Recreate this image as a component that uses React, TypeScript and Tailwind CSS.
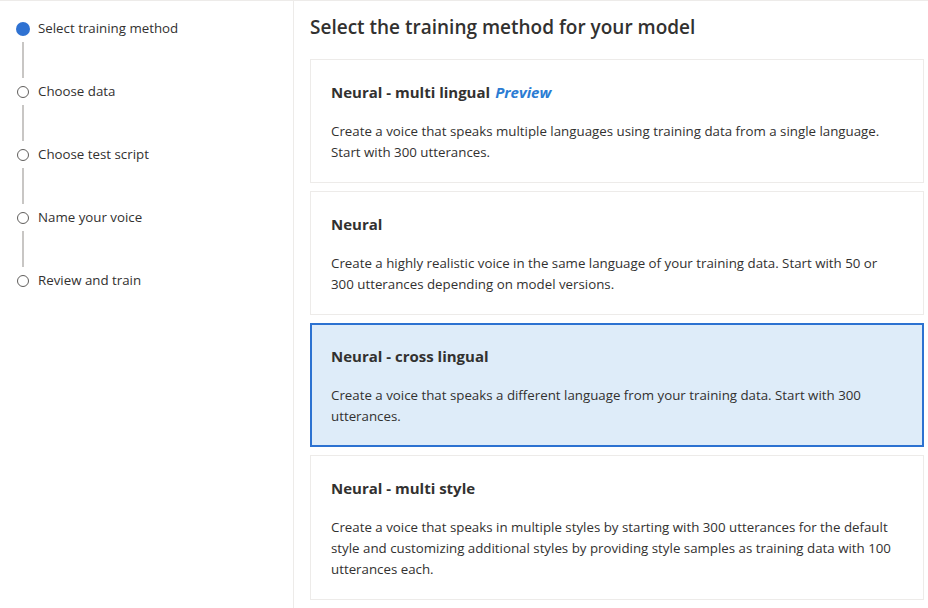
import React from "react";

const steps = [
  "Select training method",
  "Choose data",
  "Choose test script",
  "Name your voice",
  "Review and train",
];

type Method = {
  title: string;
  preview?: boolean;
  description: React.ReactNode;
};

const methods: Method[] = [
  {
    title: "Neural - multi lingual",
    preview: true,
    description: (
      <>
        Create a voice that speaks multiple languages using training data from a single language.
        <br />
        Start with 300 utterances.
      </>
    ),
  },
  {
    title: "Neural",
    description: (
      <>
        Create a highly realistic voice in the same language of your training data. Start with 50 or
        <br />
        300 utterances depending on model versions.
      </>
    ),
  },
  {
    title: "Neural - cross lingual",
    description: (
      <>
        Create a voice that speaks a different language from your training data. Start with 300
        <br />
        utterances.
      </>
    ),
  },
  {
    title: "Neural - multi style",
    description: (
      <>
        Create a voice that speaks in multiple styles by starting with 300 utterances for the default
        <br />
        style and customizing additional styles by providing style samples as training data with 100
        <br />
        utterances each.
      </>
    ),
  },
];

const Stepper = () => {
  return (
    <div className="w-[294px] shrink-0 border-r border-[#edebe9] pl-4 pt-[19px]">
      {steps.map((step, i) => (
        <div key={step}>
          <div className="flex h-[17px] items-center">
            <div className="flex w-[14px] justify-center">
              {i === 0 ? (
                <div className="h-[14px] w-[14px] rounded-full bg-[#2f72d2]" />
              ) : (
                <div className="h-[12px] w-[12px] rounded-full border border-[#605e5c]" />
              )}
            </div>
            <span className="ml-2 text-[13.3px] leading-[17px] text-[#323130]">{step}</span>
          </div>
          {i < steps.length - 1 && (
            <div className="flex h-[46px] w-[14px] items-center justify-center">
              <div className="h-[36px] w-[2px] bg-[#c8c6c4]" />
            </div>
          )}
        </div>
      ))}
    </div>
  );
};

const MethodCard = ({ method, selected }: { method: Method; selected: boolean }) => {
  return (
    <div
      className={
        selected
          ? "border-2 border-[#2c72d1] bg-[#deecf9] px-[19px] pt-[21px] pb-[18px]"
          : "border border-[#edebe9] bg-white px-5 pt-[22px] pb-[19px]"
      }
    >
      <div className="text-[15px] font-bold leading-5 text-[#323130]">
        {method.title}
        {method.preview && <span className="ml-[5px] italic text-[#2b7cd3]">Preview</span>}
      </div>
      <p className="mt-[19px] text-[13.3px] leading-[21px] text-[#323130]">{method.description}</p>
    </div>
  );
};

export default function App() {
  return (
    <div
      className="flex h-[608px] w-[928px] overflow-hidden border-t border-[#edebe9] bg-white"
      style={{ fontFamily: '"Open Sans", "Noto Sans", sans-serif' }}
    >
      <Stepper />
      <div className="flex-1 pl-4 pr-[4px]">
        <h1 className="mt-[12px] text-[19px] font-semibold leading-[28px] text-[#323130]">
          Select the training method for your model
        </h1>
        <div className="mt-[18px] flex flex-col gap-2">
          {methods.map((m, i) => (
            <MethodCard key={m.title} method={m} selected={i === 2} />
          ))}
        </div>
      </div>
    </div>
  );
}
